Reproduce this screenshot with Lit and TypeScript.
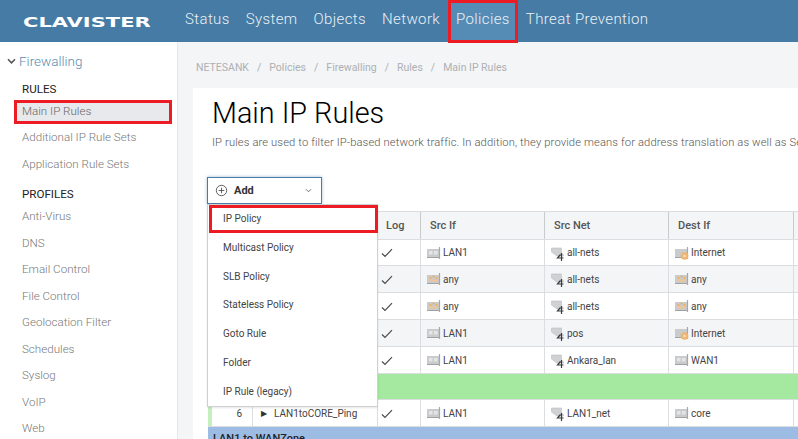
import { LitElement, html, css, svg } from "lit";
import { customElement } from "lit/decorators.js";

const ifaceIcon = (kind: string) => html`<svg class="ico" viewBox="0 0 14 16" width="14" height="16">
  <rect x="0" y="4" width="12" height="8" fill="#c9cbcd"></rect>
  <path d="M12.5 2V14" stroke="#a5a7a9" stroke-width="1.2"></path>
  <path d="M0 12.5h12" stroke="#a0a2a4" stroke-width="1"></path>
  ${kind === "any"
    ? svg`<circle cx="3.5" cy="7" r="1.1" fill="#f0ad5a"></circle><circle cx="6.5" cy="5.6" r="1.1" fill="#f0ad5a"></circle><circle cx="9.5" cy="7" r="1.1" fill="#f0ad5a"></circle><rect x="2.5" y="8.5" width="8" height="1.8" fill="#f3c48d"></rect>`
    : kind === "inet"
    ? svg`<circle cx="9.5" cy="11" r="3.8" fill="#f2b56b"></circle><circle cx="9.5" cy="11" r="1.2" fill="#e8e2d6"></circle>`
    : svg`<rect x="2" y="6" width="3.5" height="3.5" fill="#e4e5e6"></rect><rect x="7" y="6" width="3.5" height="3.5" fill="#e4e5e6"></rect>`}
</svg>`;

const netIcon = html`<svg class="ico" viewBox="0 0 14 16" width="14" height="16">
  <path d="M0.5 3h10v5l2 2v1H6l-5.5-4z" fill="#cfd1d3" stroke="#bcbec0" stroke-width=".6"></path>
  <path d="M9.5 9.5 6.5 13h6M10.5 8v8" fill="none" stroke="#3a3d40" stroke-width="1.2"></path>
</svg>`;

const check = html`<svg class="check" viewBox="0 0 12 10" width="12" height="10"><path d="M1 5.5 4 8.5 11 1.2" fill="none" stroke="#4a4d50" stroke-width="1.2"></path></svg>`;

type Row = { h: number; alt?: boolean; src: [string, string]; net: string; dst: [string, string]; no?: string; name?: string; strip?: boolean };

const rowsTop: Row[] = [
  { h: 26, src: ["lan", "LAN1"], net: "all-nets", dst: ["inet", "Internet"] },
  { h: 27, alt: true, src: ["any", "any"], net: "all-nets", dst: ["any", "any"] },
  { h: 27, src: ["any", "any"], net: "all-nets", dst: ["any", "any"] },
  { h: 27, alt: true, src: ["lan", "LAN1"], net: "pos", dst: ["inet", "Internet"] },
  { h: 27, src: ["lan", "LAN1"], net: "Ankara_lan", dst: ["lan", "WAN1"] },
];
const row6: Row = { h: 27, src: ["lan", "LAN1"], net: "LAN1_net", dst: ["lan", "core"], no: "6", name: "LAN1toCORE_Ping", strip: true };

const nav = ["Status", "System", "Objects", "Network", "Policies", "Threat Prevention"];
const rules = ["Additional IP Rule Sets", "Application Rule Sets"];
const profiles = ["Anti-Virus", "DNS", "Email Control", "File Control", "Geolocation Filter", "Schedules", "Syslog", "VoIP", "Web"];
const crumbs = ["NETESANK", "Policies", "Firewalling", "Rules", "Main IP Rules"];
const addItems = ["Multicast Policy", "SLB Policy", "Stateless Policy", "Goto Rule", "Folder", "IP Rule (legacy)"];

@customElement("app-root")
export class AppRoot extends LitElement {
  static styles = css`
    :host { display: block; width: 798px; height: 439px; overflow: hidden; font-family: Roboto, "Liberation Sans", sans-serif; background: #f4f5f7; color: #333; }
    * { box-sizing: border-box; }
    .header { height: 42px; background: #457ba5; display: flex; align-items: flex-start; position: relative; z-index: 2; }
    .logo { width: 177px; height: 42px; padding: 12px 0 0 23px; flex: none; overflow: hidden; }
    .logo span { display: inline-block; font: bold 14px/15px "DejaVu Sans", sans-serif; color: #fff; transform: scaleX(1.5); transform-origin: left center; white-space: nowrap; }
    .nav { height: 43px; padding: 0 8px 5px; display: flex; align-items: center; color: #eaf1f6; font-size: 15px; font-weight: 300; letter-spacing: .38px; white-space: nowrap; }
    .nav.active { background: #558cb5; box-shadow: inset 0 0 0 3px #ed1c24; }
    .body { display: flex; height: 397px; }
    .side { width: 178px; flex: none; background: #fff; border-right: 1px solid #e6e7ea; }
    .fw { height: 38px; padding: 0 0 0 7px; display: flex; align-items: center; gap: 3px; color: #5b8cb2; font-size: 13.5px; font-weight: 300; }
    .h { padding-left: 22px; font-size: 11.6px; color: #222; height: 16px; line-height: 16px; }
    .rules-h { margin-top: 1px; }
    .si { height: 26.5px; display: flex; align-items: center; padding-left: 22px; font-size: 11.6px; font-weight: 300; color: #777; }
    .si.cur { height: 24px; margin: 3px 5px 0 14px; padding: 0 0 2px 5px; background: #e8e9ec; border: 3px solid #ed1c24; color: #666; }
    .profiles-h { margin-top: 9px; margin-bottom: 1px; }
    .main { flex: 1; min-width: 0; padding-left: 15px; overflow: hidden; }
    .crumbs { height: 46px; padding: 4px 0 0 3px; display: flex; align-items: center; gap: 8px; font-size: 10.5px; color: #aeb0b3; white-space: nowrap; }
    .card { background: #fff; height: 351px; padding-left: 15px; overflow: hidden; }
    h1 { margin: 0 0 0 4px; padding-top: 7px; height: 47px; font-size: 28.8px; line-height: 36px; font-weight: 300; color: #000; white-space: nowrap; }
    .desc { margin: 0 0 0 4px; height: 42px; padding-top: 1px; font-size: 11.2px; line-height: 14px; color: #555; font-weight: 300; white-space: nowrap; letter-spacing: .13px; }
    .addwrap { position: relative; height: 34px; }
    .add { width: 115px; height: 27px; margin-left: -1px; background: #fff; border: 1px solid #4a7da5; box-shadow: 0 0 3px rgba(69,123,165,.5); display: flex; align-items: center; padding: 0 9px 0 7px; font-size: 11px; font-weight: 700; color: #333; gap: 6px; }
    .add .chev { margin-left: auto; }
    .menu { position: absolute; left: -1px; top: 27px; width: 171px; height: 203px; background: #fff; border: 1px solid #cfd0d2; z-index: 3; box-shadow: 0 1px 2px rgba(0,0,0,.1); display: flex; flex-direction: column; }
    .mi { height: 29.2px; display: flex; align-items: center; padding-left: 15px; font-size: 10px; color: #444; }
    .mi.sel { margin: 0 -1px 0 1px; height: 28px; padding-left: 11px; border: 3px solid #ed1c24; }
    .table { border-top: 1px solid #dcdde0; }
    .tr { display: grid; grid-template-columns: 4px 41px 125px 43px 124px 124px 125px 1fr; border-bottom: 1px solid #dcdde0; font-size: 10px; color: #444; }
    .tr.alt { background: #f4f5f7; }
    .tr.head { height: 28px; background: #f4f5f7; font-weight: 500; font-size: 11px; color: #555; }
    .td { display: flex; align-items: center; padding-left: 8px; gap: 2px; border-right: 1px solid #dcdde0; white-space: nowrap; overflow: hidden; min-width: 0; }
    .td.x { padding: 0; border: 0; }
    .td.strip { background: #c6efc0; }
    .td.no { justify-content: flex-end; padding-right: 10px; }
    .td.name { padding-left: 8px; gap: 7px; }
    .tri { font-size: 8px; color: #333; }
    .tr.head .td { padding-left: 9px; border-right-color: #c9cacc; }
    .tr.head .td.first { padding-left: 8px; }
    .ico { flex: none; margin-left: -2px; }
    .check { margin-left: -5px; margin-top: 1px; }
    .band { height: 26px; background: #a5e89f; border-bottom: 1px solid #dcdde0; }
    .blue { height: 14px; background: #9dbce4; font-size: 11px; font-weight: 500; color: #222; padding: 5px 0 0 5px; line-height: 14px; overflow: hidden; white-space: nowrap; }
  `;

  private row(r: Row) {
    return html`<div class="tr ${r.alt ? "alt" : ""}" style="height:${r.h}px">
      <div class="td x ${r.strip ? "strip" : ""}"></div>
      <div class="td no">${r.no ?? ""}</div>
      <div class="td name">${r.name ? html`<span class="tri">▶</span>${r.name}` : ""}</div>
      <div class="td">${check}</div>
      <div class="td">${ifaceIcon(r.src[0])}${r.src[1]}</div>
      <div class="td">${netIcon}${r.net}</div>
      <div class="td">${ifaceIcon(r.dst[0])}${r.dst[1]}</div>
      <div class="td"></div>
    </div>`;
  }

  render() {
    return html`
      <div class="header">
        <div class="logo"><span>CLAVISTER</span></div>
        ${nav.map((n) => html`<div class="nav ${n === "Policies" ? "active" : ""}">${n}</div>`)}
      </div>
      <div class="body">
        <div class="side">
          <div class="fw">
            <svg viewBox="0 0 10 8" width="9" height="7"><path d="M1 1.5 5 5.5 9 1.5" fill="none" stroke="#555" stroke-width="1.8"></path></svg>
            Firewalling
          </div>
          <div class="h rules-h">RULES</div>
          <div class="si cur">Main IP Rules</div>
          ${rules.map((r) => html`<div class="si">${r}</div>`)}
          <div class="h profiles-h">PROFILES</div>
          ${profiles.map((r) => html`<div class="si">${r}</div>`)}
        </div>
        <div class="main">
          <div class="crumbs">
            ${crumbs.map((c, i) => html`${i ? html`<span>/</span>` : ""}<span>${c}</span>`)}
          </div>
          <div class="card">
            <h1>Main IP Rules</h1>
            <p class="desc">IP rules are used to filter IP-based network traffic. In addition, they provide means for address translation as well as Server Load Balancing.</p>
            <div class="addwrap">
              <div class="add">
                <svg viewBox="0 0 14 14" width="13" height="13"><circle cx="7" cy="7" r="5.6" fill="none" stroke="#555" stroke-width="1"></circle><path d="M7 4v6M4 7h6" stroke="#555" stroke-width="1"></path></svg>
                <span>Add</span>
                <svg class="chev" viewBox="0 0 8 6" width="7" height="5"><path d="M1 1.5 4 4.5 7 1.5" fill="none" stroke="#555" stroke-width="1"></path></svg>
              </div>
              <div class="menu">
                <div class="mi sel">IP Policy</div>
                ${addItems.map((m) => html`<div class="mi">${m}</div>`)}
              </div>
            </div>
            <div class="table">
              <div class="tr head">
                <div class="td x"></div>
                <div class="td"></div>
                <div class="td"></div>
                <div class="td first">Log</div>
                <div class="td">Src If</div>
                <div class="td">Src Net</div>
                <div class="td">Dest If</div>
                <div class="td"></div>
              </div>
              ${rowsTop.map((r) => this.row(r))}
              <div class="band"></div>
              ${this.row(row6)}
              <div class="blue">LAN1 to WANZone</div>
            </div>
          </div>
        </div>
      </div>
    `;
  }
}
